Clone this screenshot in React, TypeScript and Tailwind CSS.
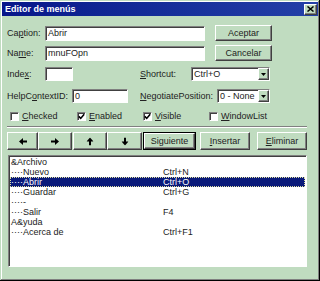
import type { ReactNode } from "react";

const face = "bg-[#c0dcc0]";

function Sunken({ className = "", children }: { className?: string; children?: ReactNode }) {
  return (
    <div
      className={`bg-white border border-t-[#808080] border-l-[#808080] border-r-white border-b-white shadow-[inset_1px_1px_0_#404040] ${className}`}
    >
      {children}
    </div>
  );
}

function Raised({ className = "", children }: { className?: string; children?: ReactNode }) {
  return (
    <div
      className={`${face} flex items-center justify-center border border-t-white border-l-white border-r-[#404040] border-b-[#404040] shadow-[inset_-1px_-1px_0_#808080] ${className}`}
    >
      {children}
    </div>
  );
}

function Arrow({ rot }: { rot: string }) {
  return (
    <svg width="8" height="7" viewBox="0 0 8 7" className={rot}>
      <polygon points="0,3.5 4,0 4,7" fill="#000" />
      <rect x="3.5" y="2.5" width="4.5" height="2" fill="#000" />
    </svg>
  );
}

function Combo({ className = "", value }: { className?: string; value: string }) {
  return (
    <Sunken className={`flex items-center h-[14px] ${className}`}>
      <span className="flex-1 pl-[2px]">{value}</span>
      <Raised className="w-[11px] h-[12px] mr-[0px]">
        <svg width="5" height="3" viewBox="0 0 5 3">
          <polygon points="0,0 5,0 2.5,3" fill="#000" />
        </svg>
      </Raised>
    </Sunken>
  );
}

function Check({ checked, label, className = "" }: { checked: boolean; label: ReactNode; className?: string }) {
  return (
    <div className={`flex items-center ${className}`}>
      <Sunken className="w-[9px] h-[9px] flex items-center justify-center">
        {checked && (
          <svg width="7" height="7" viewBox="0 0 7 7">
            <polyline points="0.8,3.4 2.7,5.4 6.2,1.2" fill="none" stroke="#000" strokeWidth="1.6" />
          </svg>
        )}
      </Sunken>
      <span className="ml-[3px]">{label}</span>
    </div>
  );
}

const rows = [
  { name: "&Archivo", key: "" },
  { name: "····Nuevo", key: "Ctrl+N" },
  { name: "····Abrir", key: "Ctrl+O", sel: true },
  { name: "····Guardar", key: "Ctrl+G" },
  { name: "····-", key: "" },
  { name: "····Salir", key: "F4" },
  { name: "A&yuda", key: "" },
  { name: "····Acerca de", key: "Ctrl+F1" },
];

export default function App() {
  return (
    <div
      className={`w-[320px] h-[281px] ${face} flex flex-col text-[9px] leading-none text-[#222] font-['Liberation_Sans',Arial,sans-serif] shadow-[inset_-1px_-1px_0_#000,inset_1px_1px_0_#c0dcc0,inset_-2px_-2px_0_#808080,inset_2px_2px_0_#fff]`}
    >
      {/* Title bar */}
      <div className="mx-[2px] mt-[2px] h-[14px] flex items-center bg-gradient-to-r from-[#08168a] to-[#2440a8]">
        <span className="pl-[3px] text-white font-bold text-[9px]">Editor de menús</span>
        <Raised className="ml-auto mr-[1px] w-[13px] h-[11px]">
          <svg width="7" height="6" viewBox="0 0 7 6">
            <path d="M0.5 0.5 L6.5 5.5 M6.5 0.5 L0.5 5.5" stroke="#000" strokeWidth="1.5" />
          </svg>
        </Raised>
      </div>

      <div className="pl-[7px] flex flex-col">
        {/* Caption */}
        <div className="flex items-center h-[16px] mt-[9px]">
          <span className="w-[38px]">
            Ca<span className="underline">p</span>tion:
          </span>
          <Sunken className="w-[160px] h-[15px] flex items-center pl-[2px]">Abrir</Sunken>
          <Raised className="ml-[10px] w-[57px] h-[16px]">Aceptar</Raised>
        </div>

        {/* Name */}
        <div className="flex items-center h-[16px] mt-[4px]">
          <span className="w-[38px]">
            Na<span className="underline">m</span>e:
          </span>
          <Sunken className="w-[160px] h-[15px] flex items-center pl-[2px]">mnuFOpn</Sunken>
          <Raised className="ml-[10px] w-[57px] h-[16px]">Cancelar</Raised>
        </div>

        {/* Index / Shortcut */}
        <div className="flex items-center h-[14px] mt-[6px]">
          <span className="w-[38px]">
            Inde<span className="underline">x</span>:
          </span>
          <Sunken className="w-[28px] h-[14px]" />
          <span className="ml-[67px] w-[51px]">
            <span className="underline">S</span>hortcut:
          </span>
          <Combo className="w-[79px]" value="Ctrl+O" />
        </div>

        {/* HelpContextID / NegotiatePosition */}
        <div className="flex items-center h-[14px] mt-[8px]">
          <span className="w-[65px]">
            HelpC<span className="underline">o</span>ntextID:
          </span>
          <Sunken className="w-[56px] h-[14px] flex items-center pl-[2px]">0</Sunken>
          <span className="ml-[12px] w-[77px]">
            <span className="underline">N</span>egotiatePosition:
          </span>
          <Combo className="w-[53px]" value="0 - None" />
        </div>

        {/* Checkboxes */}
        <div className="flex items-center h-[9px] mt-[9px]">
          <Check
            className="ml-[3px] w-[67px]"
            checked={false}
            label={<><span className="underline">C</span>hecked</>}
          />
          <Check
            className="w-[66px]"
            checked
            label={<><span className="underline">E</span>nabled</>}
          />
          <Check
            className="w-[66px]"
            checked
            label={<><span className="underline">V</span>isible</>}
          />
          <Check
            checked={false}
            label={<><span className="underline">W</span>indowList</>}
          />
        </div>

        {/* Separator */}
        <div className="mt-[5px] w-[300px] h-[2px] border-t border-t-[#808080] border-b border-b-white" />

        {/* Buttons */}
        <div className="flex items-center h-[18px] mt-[4px]">
          <Raised className="w-[31px] h-[18px]">
            <Arrow rot="" />
          </Raised>
          <Raised className="w-[34px] h-[18px]">
            <Arrow rot="rotate-180" />
          </Raised>
          <Raised className="ml-[1px] w-[34px] h-[18px]">
            <Arrow rot="rotate-90" />
          </Raised>
          <Raised className="w-[35px] h-[18px]">
            <Arrow rot="-rotate-90" />
          </Raised>
          <div className="ml-[1px] w-[53px] h-[18px] border border-black flex">
            <Raised className="flex-1 h-full">Siguiente</Raised>
          </div>
          <Raised className="ml-[4px] w-[50px] h-[18px]">
            <span>
              <span className="underline">I</span>nsertar
            </span>
          </Raised>
          <Raised className="ml-[7px] w-[50px] h-[18px]">
            <span>
              <span className="underline">E</span>liminar
            </span>
          </Raised>
        </div>

        {/* Menu list */}
        <Sunken className="mt-[5px] ml-[1px] w-[299px] h-[112px] p-[1px]">
          {rows.map((r) => (
            <div
              key={r.name}
              className={`flex items-center h-[10px] pl-[1px] ${
                r.sel
                  ? "bg-[#0a1a7a] text-white outline-1 outline-dotted outline-[#e0e0a0] -outline-offset-1"
                  : "text-[#222]"
              }`}
            >
              <span className="w-[152px]">{r.name}</span>
              <span>{r.key}</span>
            </div>
          ))}
        </Sunken>
      </div>
    </div>
  );
}
